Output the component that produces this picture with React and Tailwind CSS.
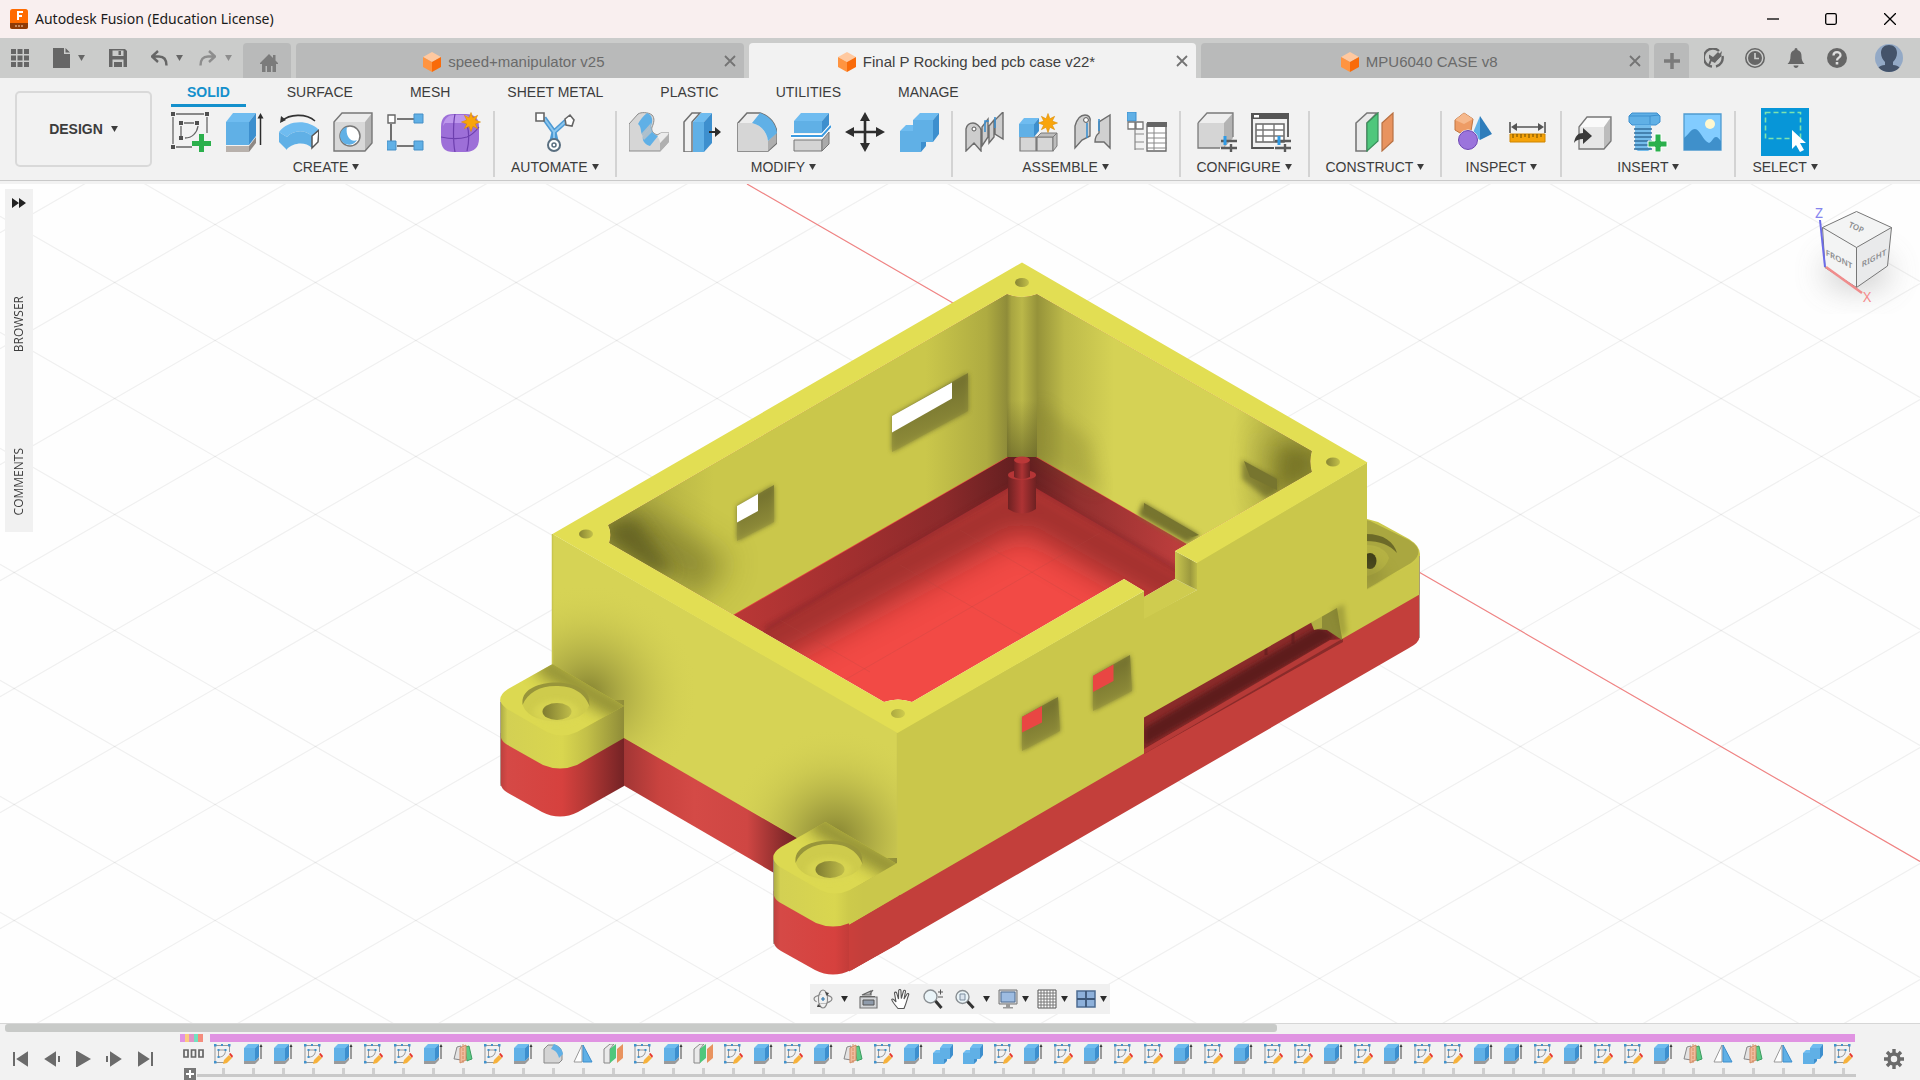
import React from "react";

const GREY = "#6b6b6b";
const BLUE = "#60b0e6";
const BLUE_TOP = "#6fbcf0";
const BLUE_SIDE = "#3d8fce";

/* ---------- small shared pieces ---------- */

function Caret({ className = "" }) {
  return (
    <svg viewBox="0 0 8 7" className={"h-1.5 w-[7px] shrink-0 " + className} aria-hidden="true">
      <path d="M0 0h8L4 7z" fill="currentColor" />
    </svg>
  );
}

function Art({ children, className = "h-10 w-10", box = "0 0 40 40" }) {
  return (
    <svg viewBox={box} className={className} fill="none" aria-hidden="true">
      {children}
    </svg>
  );
}

const Star = ({ x, y, s = 1 }) => (
  <path
    transform={`translate(${x} ${y}) scale(${s})`}
    d="M0-10 2-4.500 7-7 4.500-2 10 0 4.500 2 7 7 2 4.500 0 10-2 4.500-7 7-4.500 2-10 0-4.500-2-7-7-2-4.500z"
    fill="#f9a50b"
    stroke="#d98a00"
    strokeWidth=".6"
  />
);

/* ---------- ribbon icons ---------- */

const SketchIcon = () => (
  <Art>
    <path d="M5 2h28M2 5v27M36 5v16M5 35h16M10 14v11M13 11h10M27 14c-1 7-6 12-13 12" stroke="#666" strokeWidth="1.300" />
    <g fill="#4f4f4f">
      <path d="M0 0h4v4H0zM34 0h4v4h-4zM0 33h4v4H0zM8 9h4v4H8zM24 9h4v4h-4zM8 24h4v4H8z" />
    </g>
    <path d="M28 22h5v7h7v5h-7v7h-5v-7h-7v-5h7z" fill="#2bb04c" />
  </Art>
);

const ExtrudeIcon = () => (
  <Art>
    <path d="M1 34h23v6H1z" fill="#b8b1ac" />
    <path d="m24 34 7-9v6l-7 9z" fill="#8f8985" />
    <path d="M1 10h23v23H1z" fill={BLUE} />
    <path d="m1 10 7-9h23l-7 9z" fill={BLUE_TOP} />
    <path d="m24 10 7-9v23l-7 9z" fill={BLUE_SIDE} />
    <path d="M35.500 33V5" stroke="#2d2d2d" strokeWidth="1.500" />
    <path d="M32.500 6.500 35.500 1l3 5.500z" fill="#2d2d2d" />
  </Art>
);

const RevolveIcon = () => (
  <Art>
    <path d="M3 9C10 2 27 1 36 9" stroke="#333" strokeWidth="1.600" />
    <path d="m1 11 1-7 5 4z" fill="#333" />
    <path d="M0 20c9-12 29-13 40-2l-7 6C26 17 14 18 8 25z" fill={BLUE_TOP} />
    <path d="m0 20 8 5v13L0 30zM8 25c6-7 18-8 25-1v12c-7-7-19-5-25 1z" fill={BLUE} />
    <path d="m33 24 7-6-1 12-6 6z" fill="#fff" stroke="#555" strokeWidth="1.500" />
  </Art>
);

const HoleIcon = () => (
  <Art>
    <path d="M1 10 9 1h30l-7 9z" fill="#ececec" />
    <path d="M1 10h31v29H1z" fill="#d8d8d8" />
    <path d="m32 10 7-9v30l-7 8z" fill="#b5b5b5" />
    <path d="M1 10 9 1h30v30l-7 8H1z" stroke="#777" strokeWidth="1.400" />
    <circle cx="17" cy="24" r="10" fill="#fff" stroke="#777" strokeWidth="1.500" />
    <path d="M14 15a9 9 0 1 0 10 13c-6 3-12-4-10-13z" fill={BLUE} />
  </Art>
);

const PatternIcon = () => (
  <Art>
    <path d="M10 7h17M4 12v17M10 34h17" stroke="#4f4f4f" strokeWidth="1.600" />
    <path d="M1 3h7v8H1z" fill="#fff" stroke="#666" strokeWidth="1.400" />
    <path d="M27 2h9v9h-9zM0 29h9v9H0zM27 29h9v9h-9z" fill={BLUE} stroke="#468fc6" />
  </Art>
);

const FormIcon = () => (
  <Art>
    <path d="M0 15C0 6 4 2 12 2h13c9 0 13 5 13 13v12c0 8-5 13-13 13H12C4 40 0 36 0 27z" fill="#9d6fd8" />
    <path d="M2 14C3 6 8 3 13 3h10c5 0 7 3 2 8H4z" fill="#bd97ec" />
    <path d="M14 2c-2 10-2 28 0 38M0 25c9 2 19 2 26 0 5-2 8-5 12-10M26 12c2 8 2 19 0 27" stroke="#6d3fae" strokeWidth="1.200" />
    <Star x={30} y={10} s={0.95} />
  </Art>
);

const AutomateIcon = () => (
  <Art>
    <path d="m9 6 10 14-3 13h6l-3-13L31 9" stroke="#4d9ad4" strokeWidth="5" strokeLinejoin="round" />
    <path d="m9 6 10 14v12M19 20 31 9" stroke="#8cc6ee" strokeWidth="2" />
    <path d="M1 1h8v8H1zM30 7l5-4 4 5-2 6-6-1z" fill="#fff" stroke="#666" strokeWidth="1.600" />
    <circle cx="19" cy="33" r="6" fill="#fff" stroke="#5a6f80" strokeWidth="2" />
    <circle cx="19" cy="33" r="2" stroke="#5a6f80" strokeWidth="1.500" />
  </Art>
);

const PressPullIcon = () => (
  <Art>
    <path d="M0 12 9 2c3-2 10-2 14 1 3 3 2 8 0 12-1 4 1 6 5 8l4-2h8v8l-9 10H0z" fill="#d6d6d6" stroke="#8b8b8b" />
    <path d="m31 31 9-9v8l-9 10z" fill="#b0b0b0" />
    <path d="M28 24c2 2 3 5 3 7l9-10h-8z" fill="#ececec" />
    <path d="M9 12c2-4 5-8 9-11 6 2 6 8 4 13l-8 10c-3-3-1-9-5-12z" fill={BLUE} />
    <path d="M14 24 22 14c0 5 2 8 7 10l-8 10c-6-2-8-6-7-10z" fill={BLUE} />
    <path d="M13 21 22 11c-1 4 0 7 1 9l-8 8c-2-2-2-5-2-7z" fill="#c4c4c4" opacity=".75" />
  </Art>
);

const OffsetFaceIcon = () => (
  <Art>
    <path d="M1 10 9 1h8l-8 9v30H1z" fill="#f1f1f1" stroke="#707070" strokeWidth="1.500" />
    <path d="M10 10h11v30H10z" fill={BLUE} />
    <path d="m10 10 8-9h11l-8 9z" fill={BLUE_TOP} />
    <path d="m21 10 8-9v30l-8 9z" fill={BLUE_SIDE} />
    <path d="M26 20h7" stroke="#2d2d2d" strokeWidth="2" />
    <path d="m32 15 6 5-6 5z" fill="#2d2d2d" />
  </Art>
);

const FilletIcon = () => (
  <Art>
    <path d="M1 11 10 1h13c10 3 16 11 17 20v10l-9 8H1z" fill="#ededed" stroke="#6f6f6f" strokeWidth="1.500" />
    <path d="M1 11h13c9 1 16 9 17 18v10H1z" fill="#d6d6d6" />
    <path d="m31 29 8-8v10l-8 8z" fill="#aeaeae" />
    <path d="m15 11 8-10c10 3 16 11 17 20l-9 8C30 20 24 13 15 11z" fill={BLUE} />
  </Art>
);

const SplitIcon = () => (
  <Art>
    <path d="M3 28h28v11H3z" fill="#d4d4d4" stroke="#777" />
    <path d="m31 28 7-8v12l-7 7z" fill="#a9a9a9" stroke="#777" />
    <path d="M3 9h28v12H3z" fill={BLUE} />
    <path d="m3 9 7-8h28l-7 8z" fill={BLUE_TOP} />
    <path d="m31 9 7-8v12l-7 8z" fill={BLUE_SIDE} />
    <path d="M0 24h31l9-10" stroke="#fff" strokeWidth="4" />
    <path d="M0 24h31l9-10" stroke="#3d9be0" strokeWidth="2" />
  </Art>
);

const MoveIcon = () => (
  <Art>
    <path d="M20 6v28M6 20h28" stroke="#2e2e2e" strokeWidth="2.600" />
    <path d="m20 0 5 9H15zM20 40l5-9H15zM0 20l9-5v10zM40 20l-9-5v10z" fill="#2e2e2e" />
  </Art>
);

const CombineIcon = () => (
  <Art>
    <path d="M14 8h20v22H22v10H1V19h13z" fill={BLUE} />
    <path d="m14 8 7-7h19l-6 7zM1 19l6-6h7v6z" fill={BLUE_TOP} />
    <path d="m34 8 6-7v21l-6 8zM22 30h5v4l-5 6z" fill={BLUE_SIDE} />
  </Art>
);

const ComponentIcon = () => (
  <Art>
    <path d="M1 39V17c1-5 4-6 7-6s7 3 8 7v21l-7-8zM17 34V15l6-8v18l-6 9zM24 31l5-6V8l-5 6zM30 22V8l8-8v27l-8-5z" fill="#cdcdcd" stroke="#6d6d6d" strokeWidth="1.400" />
    <circle cx="9" cy="17" r="2" fill="#fff" stroke="#555" />
    <path d="M20 20V9h4M30 16V5" stroke="#3d8fce" strokeWidth="1.600" />
  </Art>
);

const NewComponentIcon = () => (
  <Art>
    <path d="M1 25h16v14H1zM18 25h16v14H18z" fill="#d6d6d6" stroke="#7a7a7a" strokeWidth="1.200" />
    <path d="m18 25 4-4h16l-4 4zM34 25l4-4v13l-4 5z" fill="#bdbdbd" stroke="#7a7a7a" />
    <path d="M0 12h15v13H0z" fill={BLUE} />
    <path d="m0 12 5-6h15l-5 6z" fill={BLUE_TOP} />
    <path d="m15 12 5-6v13l-5 6z" fill={BLUE_SIDE} />
    <Star x={29} y={11} s={0.95} />
  </Art>
);

const JointIcon = () => (
  <Art>
    <path d="M2 36V14C4 7 8 3 12 3s6 3 5 7v14l-8 4zM22 30c0-4 1-7 4-9V10l11-7v33l-6-6h-5z" fill="#d0d0d0" stroke="#6d6d6d" strokeWidth="1.400" />
    <circle cx="13" cy="8" r="2.400" fill="#fff" stroke="#555" />
    <path d="M14 11v15M26 7v12" stroke="#3d8fce" strokeWidth="1.600" />
  </Art>
);

const AsBuiltIcon = () => (
  <Art>
    <path d="M0 0h9v9H0z" fill={BLUE} stroke="#3d8fce" />
    <path d="M1 10h7v7H1zM9 10h7v7H9z" fill="#fff" stroke="#777" strokeWidth="1.300" />
    <path d="M8 17v21M8 22h9M8 30h9M8 37h9" stroke="#888" strokeWidth="1.200" />
    <path d="M20 12h19v27H20z" fill="#fff" stroke="#666" strokeWidth="1.300" />
    <path d="M20 10h20v5H20z" fill="#666" />
    <path d="M20 21h20M20 26h20M20 31h20M20 36h20M27 15v24" stroke="#888" />
  </Art>
);

const Sliders = () => (
  <g>
    <path d="M24 29h16M24 36h16" stroke="#5a5a5a" strokeWidth="2.400" />
    <path d="M28 24v9" stroke="#2f9be6" strokeWidth="3" />
    <path d="M34 32v8" stroke="#5a5a5a" strokeWidth="2.400" />
  </g>
);

const ConfigureIcon = () => (
  <Art>
    <path d="M1 11 10 1h26l-9 10z" fill="#eee" />
    <path d="M1 11h26v25H1z" fill="#d5d5d5" />
    <path d="m27 11 9-10v25l-9 10z" fill="#b3b3b3" />
    <path d="M1 11 10 1h26v24M1 11v25h22" stroke="#7a7a7a" strokeWidth="1.300" />
    <Sliders />
  </Art>
);

const ConfigTableIcon = () => (
  <Art>
    <path d="M1 2h36v23M1 2v34h22" stroke="#555" strokeWidth="1.800" />
    <path d="M0 1h38v6H0z" fill="#555" />
    <path d="M3 3h5v2.500H3z" fill="#fff" />
    <path d="M5 12h28v18H5z" fill="#fff" stroke="#666" strokeWidth="1.500" />
    <path d="M5 18h28M5 24h28M12 12v18M23 12v18" stroke="#777" strokeWidth="1.400" />
    <Sliders />
  </Art>
);

const PlaneIcon = () => (
  <Art>
    <path d="M1 11 12 1h10L12 11v28H1z" fill="#eaeaea" stroke="#777" strokeWidth="1.600" />
    <path d="M12 11 23 1v28L12 39z" fill="#4fc77c" stroke="#3a8f5b" strokeWidth="1.200" />
    <path d="M27 11 38 1v28L27 39z" fill="#e8935f" stroke="#b87143" strokeWidth="1.200" />
  </Art>
);

const MeasureIcon = () => (
  <Art>
    <path d="m1 8 9-7 9 6-2 12-11 2-5-3z" fill="#ee9c65" stroke="#bf7440" />
    <path d="m1 8 9 4 9-5-9-6z" fill="#f6b98d" />
    <path d="m26 4-8 19 8 5z" fill="#5fb0e6" />
    <path d="m26 4 12 18-12 6z" fill="#2f7dbb" />
    <circle cx="14" cy="28" r="10" fill="#9b74dc" stroke="#fff" strokeWidth="1" />
    <circle cx="14" cy="28" r="9.500" stroke="#6d47b0" />
  </Art>
);

const RulerIcon = () => (
  <Art>
    <path d="M2 10v11M37 10v11M7 15h25" stroke="#555" strokeWidth="1.600" />
    <path d="m3 15 6-4v8zM36 15l-6-4v8z" fill="#555" />
    <path d="M2 22h35v8H2z" fill="#f5a30a" stroke="#cf8500" />
    <path d="M5 22v4M9 22v3M13 22v4M17 22v3M21 22v4M25 22v3M29 22v4M33 22v3" stroke="#6b4800" />
  </Art>
);

const InsertIcon = () => (
  <Art>
    <path d="m5 15 8-10h24l-7 10z" fill="#fafafa" />
    <path d="M5 15h25v22H5z" fill="#e6e6e6" />
    <path d="m30 15 7-10v24l-7 8z" fill="#bcbcbc" />
    <path d="m5 15 8-10h24v24l-7 8H5z" stroke="#777" strokeWidth="1.300" />
    <path d="M0 31c1-7 4-10 9-10v-5l9 8-9 8v-5c-4 0-7 1-9 4z" fill="#3a3a3a" />
  </Art>
);

const BoltIcon = () => (
  <Art>
    <path d="m1 4 3-3h25l3 3v6l-4 3H4l-3-3z" fill={BLUE} stroke="#3d8fce" />
    <path d="M1 4h21v8M22 4l9-1" stroke="#3d8fce" />
    <path d="M7 13h16v24l-3 2H10l-3-2z" fill="#75bdec" />
    <path d="M6 17h18M6 21h18M6 25h18M6 29h18M6 33h18M6 37h18" stroke="#346f9c" strokeWidth="1.300" />
    <path d="M27 22h6v7h6v6h-6v5h-6v-5h-7v-6h7z" fill="#2bb04c" stroke="#fff" />
  </Art>
);

const ImageIcon = () => (
  <Art>
    <path d="M2 2h37v36H2z" fill="#82ccff" stroke="#4f9bd0" strokeWidth="1.300" />
    <circle cx="28" cy="12" r="5" fill="#fff8d0" />
    <path d="M2 26C7 22 9 17 13 17c5 0 8 12 14 14 3-1 4-6 7-6 2 0 3 2 5 4v9H2z" fill="#3f90cb" />
  </Art>
);

const SelectIcon = () => (
  <Art className="h-12 w-12" box="0 0 48 48">
    <path d="M0 0h48v48H0z" fill="#0796d8" />
    <path d="M4.500 4.500h35v26h-35z" stroke="#7de3ae" strokeWidth="1.600" strokeDasharray="5 3" />
    <path d="M31 22v19l4-4 4 7 4-2-4-7h6z" fill="#fff" />
  </Art>
);

/* ---------- timeline icons, drawn in a 20 by 20 box ---------- */

const tiny = "h-5 w-5";
const timelineIcons = {
  s: (
    <Art className={tiny} box="0 0 20 20">
      <path d="M2 1.500h14M2 1.500v17M16.500 1v7M2 18.500h9M5.500 6v7M6 6h6.500c0 4-2 7-6.500 7" stroke="#999" />
      <path d="M1 0h2.500v2.500H1zM15 0h2.500v2.500H15zM1 17h2.500v2.500H1zM4.500 5h2v2h-2zM11.500 5h2v2h-2zM4.500 12h2v2h-2zM8 0h2v2H8z" fill="#3f92ce" />
      <path d="m16 11 3 3-5 5-4 1 1-4z" fill="#f7b23c" />
      <path d="m16 10 1.500-1L20 12l-1 2z" fill="#e8352c" />
    </Art>
  ),
  e: (
    <Art className={tiny} box="0 0 20 20">
      <path d="M1 17h11v3H1zM12 17l4-4v3l-4 4z" fill="#9a9a9a" />
      <path d="M1 4h11v13H1z" fill={BLUE} />
      <path d="m1 4 4-4h11l-4 4z" fill={BLUE_TOP} />
      <path d="m12 4 4-4v13l-4 4z" fill={BLUE_SIDE} />
      <path d="M18 2v13" stroke="#444" />
      <path d="M16.500 3 18 0l1.500 3z" fill="#333" />
    </Art>
  ),
  m: (
    <Art className={tiny} box="0 0 20 20">
      <path d="M1 15 4 3l4-1v14l-6-1z" fill="#e3e3e3" stroke="#888" />
      <path d="m12 3 4-1 3 13-3 1-2 1z" fill="#5bcb86" stroke="#3d9a60" />
      <path d="m7 4 6-3v15l-6 3z" fill="#eebb9d" stroke="#d38d64" />
      <path d="M10 0v20" stroke="#d38d64" strokeDasharray="3 1" />
    </Art>
  ),
  f: (
    <Art className={tiny} box="0 0 20 20">
      <path d="m1 5 4-4h6c5 1 8 4 8 9v6l-3 3H1z" fill="#d4d4d4" stroke="#888" />
      <path d="m8 5 3-5c5 2 8 5 9 10l-4 4c-1-5-4-8-8-9z" fill={BLUE} />
    </Art>
  ),
  t: (
    <Art className={tiny} box="0 0 20 20">
      <path d="M9 1v17H1z" fill="#fff" stroke="#999" />
      <path d="m10 1 9 17h-9z" fill={BLUE} stroke="#3d8fce" />
    </Art>
  ),
  p: (
    <Art className={tiny} box="0 0 20 20">
      <path d="m1 5 6-5h4L7 5v14H1z" fill="#eaeaea" stroke="#888" />
      <path d="m7 5 6-5v14l-6 5z" fill="#4fc77c" />
      <path d="m14 5 6-5v14l-6 5z" fill="#e8935f" />
    </Art>
  ),
  c: (
    <Art className={tiny} box="0 0 20 20">
      <path d="M7 4h10v11h-6v5H0V9h7z" fill={BLUE} />
      <path d="m7 4 3-4h10l-3 4zM0 9l3-3h4v3z" fill={BLUE_TOP} />
      <path d="m17 4 3-4v11l-3 4zM11 15h3v2l-3 3z" fill={BLUE_SIDE} />
    </Art>
  ),
};
const timelineNames = { s: "Sketch", e: "Extrude", m: "Midplane", f: "Fillet", t: "Mirror", p: "Offset plane", c: "Combine" };
const timeline = [
  ..."seesessemseftps",
  ..."epsesemseccseses",
  ..."sesessesesse",
  ..."esesse",
  ..."mtmtcs",
];

/* ---------- application chrome ---------- */

function TitleBar() {
  return (
    <header className="flex h-[38px] shrink-0 items-center bg-[#f9efef] pl-[10px] font-['Noto_Sans',sans-serif]">
      <svg viewBox="0 0 18 20" className="h-5 w-[18px]" aria-hidden="true">
        <rect width="18" height="20" rx="2.500" fill="#ff6b00" />
        <path d="M0 14h18v3.500a2.500 2.500 0 0 1-2.500 2.500h-13A2.500 2.500 0 0 1 0 17.500z" fill="#8f3b06" />
        <path d="M7 3h6M8 3v8M8 7h4" stroke="#fff" strokeWidth="2" />
        <path d="M5 17h8" stroke="#d8a27c" strokeWidth="1.500" strokeDasharray="2 1" />
      </svg>
      <h1 className="ml-[7px] text-sm text-[#1a1a1a]">Autodesk Fusion (Education License)</h1>
      <div className="ml-auto flex h-full text-black">
        <button aria-label="Minimize" className="flex w-[58px] items-center justify-center">
          <Art className="h-3 w-3" box="0 0 12 12"><path d="M0 6h12" stroke="currentColor" strokeWidth="1.300" /></Art>
        </button>
        <button aria-label="Maximize" className="flex w-[58px] items-center justify-center">
          <Art className="h-3 w-3" box="0 0 12 12"><rect x=".7" y=".7" width="10.600" height="10.600" rx="1.500" stroke="currentColor" strokeWidth="1.300" /></Art>
        </button>
        <button aria-label="Close" className="flex w-[60px] items-center justify-center">
          <Art className="h-3 w-3" box="0 0 12 12"><path d="m0 0 12 12M12 0 0 12" stroke="currentColor" strokeWidth="1.300" /></Art>
        </button>
      </div>
    </header>
  );
}

function DocCube() {
  return (
    <svg viewBox="0 0 18 20" className="h-5 w-[18px] shrink-0" aria-hidden="true">
      <path d="m9 0 9 5-9 5-9-5z" fill="#ffc9a0" />
      <path d="m0 5 9 5v10l-9-5z" fill="#ff9440" />
      <path d="m18 5-9 5v10l9-5z" fill="#f96b0a" />
    </svg>
  );
}

function DocTab({ title, active }) {
  return (
    <div
      className={
        "flex h-[35px] min-w-0 flex-1 items-center rounded-t-[4px] pl-2 pr-2 " +
        (active ? "bg-[#f2f2f2] text-[#404040]" : "bg-[#b9baba] text-[#6a6a6a]")
      }
    >
      <button role="tab" aria-selected={!!active} className="flex h-full flex-1 items-center justify-center gap-[7px] pt-0.5 text-[15px] leading-5">
        <DocCube />
        <span className="whitespace-nowrap">{title}</span>
      </button>
      <button aria-label={"Close " + title} className="text-[#747474]">
        <Art className="h-3 w-3" box="0 0 12 12"><path d="m1 1 10 10M11 1 1 11" stroke="currentColor" strokeWidth="1.800" /></Art>
      </button>
    </div>
  );
}

function TabBar() {
  return (
    <div className="flex h-10 shrink-0 items-end bg-[#cbcccb] text-[#666]">
      <div className="flex h-full items-center pl-[11px]">
        <button aria-label="Show data panel">
          <Art className="h-[18px] w-[18px]" box="0 0 18 18">
            <path d="M0 0h5v5H0zM6.500 0h5v5h-5zM13 0h5v5h-5zM0 6.500h5v5H0zM6.500 6.500h5v5h-5zM13 6.500h5v5h-5zM0 13h5v5H0zM6.500 13h5v5h-5zM13 13h5v5h-5z" fill="currentColor" />
          </Art>
        </button>
        <button aria-label="File" className="ml-6 flex items-center gap-[7px]">
          <Art className="h-5 w-[18px]" box="0 0 18 20"><path d="M0 0h11v6h6v14H0zM12.500 0 17 4.500h-4.500z" fill="currentColor" /></Art>
          <Caret />
        </button>
        <button aria-label="Save" className="ml-6">
          <Art className="h-[18px] w-[18px]" box="0 0 18 18">
            <path d="M0 0h16l2 2v16H0zM3.500 1.500V7h11V1.500zM3.500 10.500V18H5v-5h8v5h1.500v-7.500z" fill="currentColor" fillRule="evenodd" />
            <path d="M9.500 2H12v4H9.500zM6.500 14h2v4h-2z" fill="currentColor" />
          </Art>
        </button>
        <button aria-label="Undo" className="ml-6 flex items-center gap-2">
          <Art className="h-4 w-[17px]" box="0 0 17 16"><path d="m7 1-6 5.500L7 12M2 6.500h6c5 0 7.500 3 7.500 9" stroke="currentColor" strokeWidth="2.400" /></Art>
          <Caret />
        </button>
        <button aria-label="Redo" className="ml-4 mr-[11px] flex items-center gap-[9px] text-[#8d8d8d]">
          <Art className="h-4 w-[17px]" box="0 0 17 16"><path d="m10 1 6 5.500-6 5.500M15 6.500H9c-5 0-7.500 3-7.500 9" stroke="currentColor" strokeWidth="2.400" /></Art>
          <Caret />
        </button>
      </div>
      <div role="tablist" aria-label="Documents" className="flex flex-1 gap-[5px]">
        <button aria-label="Home" className="flex h-[35px] w-12 shrink-0 items-center justify-center rounded-t-[4px] bg-[#b9baba] pt-1 pl-1">
          <Art className="h-[18px] w-[18px]" box="0 0 18 18">
            <path d="m0 9 9-9 4 4V1h2.500v5.500L18 9v1h-2v8h-3.500v-6H11v6H7v-6H5.500v6H2v-8H0z" fill="#7b7b7b" />
          </Art>
        </button>
        <DocTab title="speed+manipulator v25" />
        <DocTab title="Final P Rocking bed pcb case v22*" active />
        <DocTab title="MPU6040 CASE v8" />
        <button aria-label="New tab" className="flex h-[35px] w-[35px] shrink-0 items-center justify-center rounded-t-[4px] bg-[#b9baba]">
          <Art className="h-4 w-4" box="0 0 16 16"><path d="M8 0v16M0 8h16" stroke="#7b7b7b" strokeWidth="3.500" /></Art>
        </button>
      </div>
      <div className="flex h-full items-center pl-1 pr-[17px]">
        <button aria-label="Extensions" className="flex w-[41px] justify-center">
          <Art className="h-5 w-5" box="0 0 20 20">
            <path d="M8 18.500A9 9 0 1 1 15 3M18.500 8A9 9 0 0 1 12 18.500" stroke="currentColor" strokeWidth="2.400" />
            <path d="M5 6.500 9 9l5-5 1.500 1.500L18 3l-1 5-4 4-2 3-4-2-2-3z" fill="currentColor" />
            <path d="m11 13 6-6M7 12l-2 5" stroke="currentColor" strokeWidth="2" />
          </Art>
        </button>
        <button aria-label="Job status" className="flex w-[41px] justify-center">
          <Art className="h-5 w-5" box="0 0 20 20">
            <circle cx="10" cy="10" r="9.200" stroke="currentColor" strokeWidth="1.600" />
            <circle cx="10" cy="10" r="7" fill="currentColor" />
            <path d="M10 5v5.500h4" stroke="#cbcccb" strokeWidth="1.700" />
          </Art>
        </button>
        <button aria-label="Notifications" className="flex w-[41px] justify-center">
          <Art className="h-5 w-[18px]" box="0 0 18 20"><path d="M9 0c1 0 1.500.7 1.500 2 3 1 4 3 4 6 0 4 1 6 3 8H.5c2-2 3-4 3-8 0-3 1-5 4-6 0-1.300.5-2 1.500-2zM6.500 17.500h5c0 3.300-5 3.300-5 0z" fill="currentColor" /></Art>
        </button>
        <button aria-label="Help" className="flex w-[41px] justify-center">
          <Art className="h-5 w-5" box="0 0 20 20">
            <circle cx="10" cy="10" r="10" fill="currentColor" />
            <path d="M6.500 7.500c0-4.500 7-4.500 7-.3 0 2.500-3.500 2.500-3.500 5.300" stroke="#dedede" strokeWidth="2.300" />
            <path d="M8.700 14h2.600v2.500H8.700z" fill="#dedede" />
          </Art>
        </button>
        <button aria-label="Account" className="ml-[18px]">
          <Art className="h-7 w-7" box="0 0 28 28">
            <circle cx="14" cy="14" r="14" fill="#93a9c6" />
            <path d="M14 1c5 0 8 3 8 8 0 4-2 7-4 9v3c3 0 5 1 6.500 2.500C21 27 18 28 14 28s-7-1-10.500-4.500C5 22 7 21 10 21v-3c-2-2-4-5-4-9 0-5 3-8 8-8z" fill="#44536a" />
          </Art>
        </button>
      </div>
    </div>
  );
}

const ribbonTabs = ["SOLID", "SURFACE", "MESH", "SHEET METAL", "PLASTIC", "UTILITIES", "MANAGE"];
const ribbonGroups = [
  ["CREATE", [["Create sketch", SketchIcon], ["Extrude", ExtrudeIcon], ["Revolve", RevolveIcon], ["Hole", HoleIcon], ["Pattern", PatternIcon], ["Create form", FormIcon]]],
  ["AUTOMATE", [["Automated modeling", AutomateIcon]]],
  ["MODIFY", [["Press pull", PressPullIcon], ["Offset face", OffsetFaceIcon], ["Fillet", FilletIcon], ["Split", SplitIcon], ["Move", MoveIcon], ["Combine", CombineIcon]]],
  ["ASSEMBLE", [["Derive", ComponentIcon], ["New component", NewComponentIcon], ["Joint", JointIcon], ["Parts table", AsBuiltIcon]]],
  ["CONFIGURE", [["Configure design", ConfigureIcon], ["Configuration table", ConfigTableIcon]]],
  ["CONSTRUCT", [["Offset plane", PlaneIcon]]],
  ["INSPECT", [["Interference", MeasureIcon], ["Measure", RulerIcon]]],
  ["INSERT", [["Insert derive", InsertIcon], ["Insert fastener", BoltIcon], ["Canvas", ImageIcon]]],
  ["SELECT", [["Select", SelectIcon]]],
];

function Ribbon() {
  return (
    <div className="flex shrink-0 border-b border-[#c9c9c9] bg-[#f2f2f2] pl-[15px] pb-[3px] text-sm leading-5 text-[#3c3c3c]">
      <button className="mt-[13px] flex h-[76px] w-[137px] shrink-0 items-center justify-center gap-2 rounded-[5px] border-2 border-[#d9d9d9] font-bold">
        DESIGN
        <Caret />
      </button>
      <div className="ml-[7px]">
        <nav className="flex gap-[25px] pl-3">
          {ribbonTabs.map((t, i) => (
            <button
              key={t}
              className={
                "border-b-[3px] px-4 pt-1 pb-0.5 " +
                (i === 0 ? "border-[#1490cc] font-bold text-[#1490cc]" : "border-transparent")
              }
            >
              {t}
            </button>
          ))}
        </nav>
        <div className="mt-1 flex">
          {ribbonGroups.map(([label, tools], i) => (
            <section
              key={label}
              aria-label={label}
              className={"flex h-[66px] flex-col items-center pt-px " + (i < 8 ? "border-r-2 border-[#d3d3d3]" : "")}
            >
              <div className="flex h-10 items-center gap-[14px] px-3">
                {tools.map(([name, Icon]) => (
                  <button key={name} aria-label={name} title={name}>
                    <Icon />
                  </button>
                ))}
              </div>
              <button className="mt-[5px] flex items-center gap-1 px-4">
                {label}
                <Caret />
              </button>
            </section>
          ))}
        </div>
      </div>
    </div>
  );
}

/* ---------- 3D viewport ---------- */

const STEP_X = 100.4;
const STEP_Y = 58;

function GridLines() {
  const lines = [];
  for (let k = -14; k <= 18; k++) {
    const y = 282.5 + k * STEP_Y * 2;
    const left = (1319.5 / STEP_X) * STEP_Y;
    const right = ((1920 - 1319.5) / STEP_X) * STEP_Y;
    lines.push(<path key={"a" + k} d={`M0 ${y - left}L1920 ${y + right}`} />);
    lines.push(<path key={"b" + k} d={`M0 ${y + left}L1920 ${y - right}`} />);
  }
  return <g stroke="#000" strokeOpacity=".06" strokeWidth="1.200">{lines}</g>;
}

const INNER =
  "M608 525 1007 294Q1022 300 1037 294L1312 451Q1309 461 1312 472L1175 551V579L1144 597V591L1124 579 912 702Q898 697 884 702L609 543Q612 533 608 525z";

const FOOT_TOP = "M552.500 664 508 689Q493 699 507 709L547 732Q562 739 577 732L624 706z";

function Foot() {
  return (
    <g>
      <path d="M500.500 733V783Q501 789 508 793L542 812Q560 821 578 812L624 786V736z" fill="url(#footRed)" />
      <path d="M500.500 700V735Q501 741 506 744L543 765Q560 772 577 765L624 738V700z" fill="url(#footYellow)" />
      <path d={FOOT_TOP} fill="#dcd951" />
      <g clipPath="url(#footTop)">
        <path d="M540 652 640 710 622 724 535 672z" fill="#75732a" opacity=".75" filter="url(#soft)" />
      </g>
      <ellipse cx="556" cy="702.500" rx="33.500" ry="19" fill="#cecb4c" />
      <path d="M522.500 702c0-26 67-26 67 0v4c-6-15-18-20-34-20s-28 7-33 19z" fill="#98953a" />
      <ellipse cx="556.500" cy="712" rx="23" ry="12" fill="#dad752" opacity=".75" filter="url(#soft2)" />
      <ellipse cx="557" cy="711.500" rx="14.500" ry="8.500" fill="url(#screw)" />
    </g>
  );
}

const Window3d = ({ d, cut, fill }) => (
  <g>
    <path d={d} fill="#6b692c" opacity=".85" filter="url(#soft2)" />
    <path d={d} fill="url(#ledge)" opacity=".75" />
    <path d={cut} fill={fill} />
  </g>
);

function Model() {
  return (
    <g>
      {/* rear mounting foot */}
      <path d="M1360 517 1378 522 1409 539Q1420 546 1420 554V594L1360 630z" fill="#ccc94c" />
      <path d="M1360 518 1370 521 1409 540Q1427 551 1411 563L1360 593z" fill="#aaa740" />
      <path d="M1366 534C1384 534 1394 542 1397 553 1390 545 1380 541 1366 541z" fill="#6c6a28" />
      <path d="M1367 545c12 0 20 6 22 13-4 12-14 16-22 18z" fill="#b5b244" />
      <ellipse cx="1370" cy="561" rx="6.500" ry="8" fill="#3f3e19" />
      <path d="M1362 560v30l25-14z" fill="#77752e" opacity=".5" filter="url(#soft)" />

      {/* outer red base band */}
      <path d="M623 733 800 836V888L623 785z" fill="url(#redBand)" />
      <path d="M845 915 1144 740 1419.500 590V637Q1419 643 1409 648L851 970.500z" fill="#c33f3b" />

      {/* slot in the long side */}
      <path d="M1144 715 1340 602 1343 642 1144 754z" fill="#8a2b2a" />
      <path d="M1144 728 1320 626 1336 636 1144 746z" fill="#4b1617" opacity=".7" filter="url(#soft2)" />
      <path d="M1144 749 1330 640 1342 639 1144 754z" fill="#b63a37" />
      <path d="M1266 643v12M1293 630v14" stroke="#5e1c1d" strokeWidth="3" opacity=".6" />
      <path d="M1310 621 1339 604 1342 640 1327 630 1314 629z" fill="#8d8b37" />
      <path d="M1311 621 1322 616V628L1314 630z" fill="#b2af44" />

      {/* interior */}
      <path d={INNER} fill="#f24a45" />
      <g clipPath="url(#inner)">
        <path d="M690 680 1022 500 1230 618" stroke="#4d1415" strokeWidth="52" opacity=".5" fill="none" filter="url(#wide)" />
        <path d="M700 635 1022 449 1240 575V607L1022 480 740 644z" fill="url(#redWall)" />
        <path d="M765 629 1022 481 1180 571" stroke="#7e2426" strokeWidth="4" opacity=".55" fill="none" filter="url(#soft2)" />
        <path d="M590 525 1007 284V457L733 615 590 700z" fill="url(#wallL)" />
        <path d="M1037 284 1330 455V520L1187 544 1037 457z" fill="url(#wallR)" />
        <path d="M1037 457 1100 494 1090 440 1037 400z" fill="#66641f" opacity=".22" filter="url(#soft)" />
        <path d="M600 520 640 505 730 560 700 600z" fill="#57551f" opacity=".5" filter="url(#wide)" />
        <path d="M603 523 635 518 675 573 650 572 609 543z" fill="#57551f" opacity=".7" filter="url(#soft)" />
        <path d="M1262 430 1316 450V476L1262 502z" fill="#66641f" opacity=".45" filter="url(#wide)" />
        <path d="M1282 446 1314 451V474L1275 494z" fill="#66641f" opacity=".55" filter="url(#soft)" />
        <path d="M1242 460 1277 479V492L1266 498 1242 479z" fill="#5f5d25" opacity=".6" filter="url(#soft2)" />
        <path d="M1244 461 1277 479V490L1250 477z" fill="#77752f" />
        <path d="M1143 502 1200 535 1187 543 1138 515z" fill="#77752f" filter="url(#soft2)" />
        <path d="M1144 503 1199 535 1192 537 1144 509z" fill="#77752f" />
        <path d="M1007 290h30v167h-30z" fill="url(#post)" />
        <path d="M1007 400h30v57h-30z" fill="url(#postShade)" />
        <g stroke="#b24a44" strokeOpacity=".22">
          <path d="M810 700 1100 533M900 565 1050 652M960 530 1110 618M780 620 870 672" />
        </g>
      </g>
      <Window3d d="M892 416 968 373V411L892 452z" cut="M892 416 952 382.500V398.500L892 432.500z" fill="#fff" />
      <Window3d d="M737 506 774 485V522L737 541z" cut="M737 506 758 494V511L737 522.500z" fill="#fff" />
      <path d="M1008 475v34q14 9 28 0v-34z" fill="url(#pin)" />
      <ellipse cx="1022" cy="475" rx="14" ry="5" fill="#b53536" />
      <path d="M1014 459v18q8 4 16 0v-18z" fill="url(#pin)" />
      <ellipse cx="1022" cy="460" rx="8" ry="3.500" fill="#bb3838" />

      {/* outer walls */}
      <path d="M552.500 534V665L624 738 797 838 898 862V732z" fill="#d6d355" />
      <path d="M552.500 560V665L624 738 720 790 700 600z" fill="url(#footShadow1)" />
      <path d="M700 780 797 838 898 862V750L830 720z" fill="url(#footShadow2)" />
      <path
        d="M897.500 732 1144 591V618L1197 590V562L1367 462.500V590L1419.500 560V594.500L1342 639 1337 608 1144 717.500V753.500L852 923 840 880 897.500 862z"
        fill="#cac74b"
      />
      <path d="M1332 610 1344 604 1347 632 1341 638z" fill="#82802f" opacity=".5" filter="url(#soft2)" />
      <path d="M1144 597 1175 579 1197 590 1144 619z" fill="#cfcc4f" />
      <path d="M1175 551 1197 563V590L1175 579z" fill="url(#notch)" />

      {/* top rim */}
      <path
        fillRule="evenodd"
        d="M552.500 534 1022 262.500 1367.500 462.500 1197 563 1175 551 1312 472Q1309 461 1312 451L1037 294Q1022 300 1007 294L608 525Q612 533 609 543L884 702Q898 697 912 702L1124 579 1144 591 897.500 733z"
        fill="#e2de53"
      />
      <path d="M552.500 534V664M897.500 733V862" stroke="#c9c64e" strokeWidth="1.500" />
      {[[1022, 282.5], [586, 534], [1333, 462], [898, 713.5]].map(([x, y]) => (
        <ellipse key={x} cx={x} cy={y} rx="7" ry="4.500" fill="url(#screw)" opacity={y > 700 ? 0.55 : 0.9} />
      ))}

      <Window3d d="M1022 717 1058 697 1060 731 1022 751z" cut="M1022 717 1042 706V722.500L1022 732.500z" fill="#e94643" />
      <Window3d d="M1093 676 1130 655 1132 691 1093 711z" cut="M1093 676 1113.500 664.500V681L1093 692z" fill="#e94643" />

      {/* front feet */}
      <Foot />
      <g transform="translate(273 158)"><Foot /></g>
      <path d="M849 891 898 862.500V897L849 925z" fill="url(#turnYellow)" />
      <path d="M849 925 900 895V943L849 971.500z" fill="url(#turnRed)" />
      <path d="M1419.500 556V638M500.500 702V786M773.500 860V944" stroke="#9b8f86" strokeWidth="1" opacity=".7" />
    </g>
  );
}

function ViewCube() {
  return (
    <g fontFamily="'Noto Sans', sans-serif">
      <ellipse cx="1857" cy="272" rx="34" ry="16" fill="#777" opacity=".4" filter="url(#wide)" />
      <path d="M1856.500 211.500 1891.500 227.500 1887.500 266 1856.500 287.500 1825 267.500 1822.500 227.500z" fill="#f3f4f4" />
      <path d="M1856.500 247.500 1891.500 227.500 1887.500 266 1856.500 287.500z" fill="#e9eaeb" />
      <path d="M1822.500 227.500 1856.500 211.500 1891.500 227.500 1887.500 266 1856.500 287.500 1825 267.500zM1822.500 227.500 1856.500 247.500 1891.500 227.500M1856.500 247.500V287.500" fill="none" stroke="#777" />
      <path d="M1820 220 1825 267" stroke="#6b6be8" strokeWidth="2" />
      <path d="M1826 267 1862 293" stroke="#f08c8c" strokeWidth="2.500" />
      <g fill="#8b8d8f" fontWeight="600" textAnchor="middle" fontSize="8">
        <text transform="translate(1839 262) skewY(28)">FRONT</text>
        <text transform="translate(1874 261) skewY(-28)">RIGHT</text>
        <text transform="translate(1855 230) rotate(24)">TOP</text>
      </g>
      <text x="1819" y="218" fontSize="14" fill="#8585ee" textAnchor="middle">Z</text>
      <text x="1867" y="302" fontSize="14" fill="#f58c8c" textAnchor="middle">X</text>
    </g>
  );
}

function Scene() {
  return (
    <svg viewBox="0 184 1920 839" preserveAspectRatio="xMidYMid slice" className="absolute inset-0 h-full w-full" role="img" aria-label="Isometric view of the case">
      <defs>
        <clipPath id="inner"><path d={INNER} /></clipPath>
        <clipPath id="footTop"><path d={FOOT_TOP} /></clipPath>
        <filter id="soft2" x="-30%" y="-30%" width="160%" height="160%"><feGaussianBlur stdDeviation="2.500" /></filter>
        <filter id="soft" x="-60%" y="-60%" width="220%" height="220%"><feGaussianBlur stdDeviation="8" /></filter>
        <filter id="wide" x="-60%" y="-80%" width="220%" height="260%"><feGaussianBlur stdDeviation="16" /></filter>
        <linearGradient id="wallL" gradientUnits="userSpaceOnUse" x1="600" y1="0" x2="1007" y2="0">
          <stop offset="0" stopColor="#a5a23f" /><stop offset=".28" stopColor="#cac74b" /><stop offset=".8" stopColor="#cac74b" /><stop offset=".95" stopColor="#aeab41" /><stop offset="1" stopColor="#8f8c39" />
        </linearGradient>
        <linearGradient id="wallR" gradientUnits="userSpaceOnUse" x1="1037" y1="0" x2="1312" y2="0">
          <stop offset="0" stopColor="#959239" /><stop offset=".1" stopColor="#bdba4a" /><stop offset=".28" stopColor="#d5d255" /><stop offset=".72" stopColor="#d5d255" /><stop offset="1" stopColor="#a19e3e" />
        </linearGradient>
        <linearGradient id="redWall" gradientUnits="userSpaceOnUse" x1="700" y1="0" x2="1240" y2="0">
          <stop offset="0" stopColor="#c13a38" /><stop offset=".25" stopColor="#a53030" /><stop offset=".45" stopColor="#8c2a2b" /><stop offset=".6" stopColor="#5f1e1f" /><stop offset=".7" stopColor="#92302f" /><stop offset=".88" stopColor="#bb3d3c" /><stop offset="1" stopColor="#bb3d3c" />
        </linearGradient>
        <linearGradient id="redBand" gradientUnits="userSpaceOnUse" x1="624" y1="0" x2="800" y2="0">
          <stop offset="0" stopColor="#a23635" /><stop offset=".2" stopColor="#c9433f" /><stop offset=".4" stopColor="#d44a46" /><stop offset=".7" stopColor="#cf4643" /><stop offset=".9" stopColor="#8a2c2c" /><stop offset="1" stopColor="#6e2224" />
        </linearGradient>
        <linearGradient id="ledge" x1="0" y1="0" x2=".3" y2="1">
          <stop offset="0" stopColor="#5f5d27" /><stop offset="1" stopColor="#9d9a3f" />
        </linearGradient>
        <linearGradient id="post">
          <stop offset="0" stopColor="#8f8c39" /><stop offset=".15" stopColor="#a8a541" /><stop offset=".5" stopColor="#bbb849" /><stop offset="1" stopColor="#96933a" />
        </linearGradient>
        <linearGradient id="postShade" x2="0" y2="1">
          <stop offset="0" stopColor="#5d5b24" stopOpacity="0" /><stop offset="1" stopColor="#5d5b24" stopOpacity=".6" />
        </linearGradient>
        <linearGradient id="pin">
          <stop offset="0" stopColor="#6e2122" /><stop offset=".5" stopColor="#ae3334" /><stop offset="1" stopColor="#6e2122" />
        </linearGradient>
        <linearGradient id="notch">
          <stop offset="0" stopColor="#c9c64f" /><stop offset=".7" stopColor="#9c993e" /><stop offset="1" stopColor="#bebb48" />
        </linearGradient>
        <linearGradient id="screw">
          <stop offset="0" stopColor="#7f7c30" /><stop offset="1" stopColor="#bfbc49" />
        </linearGradient>
        <linearGradient id="footRed" gradientUnits="userSpaceOnUse" x1="500" y1="0" x2="624" y2="0">
          <stop offset="0" stopColor="#b9403e" /><stop offset=".06" stopColor="#d54946" /><stop offset=".5" stopColor="#d6413e" /><stop offset=".68" stopColor="#b73936" /><stop offset="1" stopColor="#742325" />
        </linearGradient>
        <linearGradient id="footYellow" gradientUnits="userSpaceOnUse" x1="500" y1="0" x2="624" y2="0">
          <stop offset="0" stopColor="#a9a744" /><stop offset=".06" stopColor="#d3d053" /><stop offset=".5" stopColor="#d9d64f" /><stop offset=".7" stopColor="#c3c048" /><stop offset="1" stopColor="#8f8c38" />
        </linearGradient>
        <linearGradient id="turnYellow"><stop offset="0" stopColor="#cdca4b" /><stop offset=".3" stopColor="#cac74b" /></linearGradient>
        <linearGradient id="turnRed"><stop offset="0" stopColor="#ca3f3b" /><stop offset=".3" stopColor="#c33f3b" /></linearGradient>
        <radialGradient id="footShadow1" gradientUnits="userSpaceOnUse" cx="588" cy="694" r="110">
          <stop offset="0" stopColor="#75732a" stopOpacity=".85" /><stop offset=".3" stopColor="#8d8b37" stopOpacity=".55" /><stop offset=".65" stopColor="#a9a642" stopOpacity=".22" /><stop offset="1" stopColor="#d6d355" stopOpacity="0" />
        </radialGradient>
        <radialGradient id="footShadow2" gradientUnits="userSpaceOnUse" cx="835" cy="838" r="110">
          <stop offset="0" stopColor="#75732a" stopOpacity=".85" /><stop offset=".3" stopColor="#8d8b37" stopOpacity=".6" /><stop offset=".65" stopColor="#a9a642" stopOpacity=".22" /><stop offset="1" stopColor="#d6d355" stopOpacity="0" />
        </radialGradient>
      </defs>
      <rect y="0" width="1920" height="1200" fill="#fefefe" />
      <GridLines />
      <path d="M747 184 1920 861.500" stroke="#f27f7f" strokeWidth="1.100" />
      <Model />
      <ViewCube />
    </svg>
  );
}

function SidePanel() {
  return (
    <aside className="absolute top-[5px] left-[5px] flex w-7 flex-col items-center bg-[#f1f1f1] pt-[9px] pb-4 font-['Open_Sans',sans-serif] text-xs leading-4 text-[#3c3c3c]">
      <button aria-label="Expand browser">
        <Art className="h-2.5 w-3.5" box="0 0 14 10"><path d="m0 0 7 5-7 5zM7 0l7 5-7 5z" fill="#222" /></Art>
      </button>
      <button className="mt-[88px] rotate-180 [writing-mode:vertical-rl]">BROWSER</button>
      <button className="mt-24 rotate-180 [writing-mode:vertical-rl]">COMMENTS</button>
    </aside>
  );
}

function NavBar() {
  return (
    <div className="absolute bottom-[9px] left-1/2 flex h-[30px] -translate-x-1/2 items-center bg-[#f0f0f0] px-[3px] text-[#2b2b2b]">
      <button aria-label="Orbit" className="flex items-center gap-2">
        <Art className="h-5 w-5" box="0 0 20 20">
          <ellipse cx="10" cy="10" rx="4.500" ry="9" stroke="#888" strokeWidth="1.200" />
          <ellipse cx="10" cy="10" rx="9" ry="4" stroke="#888" strokeWidth="1.200" strokeDasharray="13 4" />
          <path d="M6.500 6h7v8h-7z" fill="#f0f0f0" />
          <path d="M10 8v4M8 10h4" stroke="#2f77ad" strokeWidth="1.200" />
          <path d="m12 3 4 1-2 3zM5 15l-1 3 4 0z" fill="#444" />
        </Art>
        <Caret />
      </button>
      <button aria-label="Look at" className="ml-[11px]">
        <Art className="h-5 w-5" box="0 0 20 20">
          <path d="M1 8h17v11H1z" fill="#d3d5d8" stroke="#777" strokeWidth="1.200" />
          <path d="M4 11h11v5H4z" fill="#8f9bab" stroke="#555" />
          <path d="M3 6 12 2v4zM11 5l3-4M1 7.500h15" stroke="#666" strokeWidth="1.200" fill="#bbb" />
        </Art>
      </button>
      <button aria-label="Pan" className="ml-3">
        <Art className="h-5 w-5" box="0 0 20 20">
          <path d="M7 19.500C4 16 1 12 .7 10.500c.6-1 2-.6 4.300 2.500L3.500 4c.5-1.500 2-1 2.300.3L7.500 10 7.700 1.500c.5-1.300 2-1.200 2.200 0l.4 8L12.500 2c.6-1.200 2-.8 2 .5L13 10l3-5c.8-1 2-.3 1.700.8-1.700 4-2 8-4.700 13.700z" fill="#fff" stroke="#555" strokeWidth="1.100" />
        </Art>
      </button>
      <button aria-label="Zoom" className="ml-3">
        <Art className="h-5 w-5" box="0 0 20 20">
          <circle cx="7.500" cy="7.500" r="6.500" fill="#eaf4f8" stroke="#8a8f93" strokeWidth="1.400" />
          <path d="m12.500 12 6 7" stroke="#333" strokeWidth="3" />
          <path d="M15 3h5M17.500.5v5M15 8h5" stroke="#555" />
        </Art>
      </button>
      <button aria-label="Fit" className="ml-3 flex items-center gap-2">
        <Art className="h-5 w-5" box="0 0 20 20">
          <circle cx="7.500" cy="8" r="6.500" fill="#eaf4f8" stroke="#8a8f93" strokeWidth="1.400" />
          <path d="M5 5h5v6H5z" fill="#dbe4ee" stroke="#7d8d9e" />
          <path d="m12.500 12.500 6 6.500" stroke="#333" strokeWidth="3" />
        </Art>
        <Caret />
      </button>
      <button aria-label="Display settings" className="ml-2 flex items-center gap-1">
        <Art className="h-5 w-5" box="0 0 20 20">
          <path d="M1 1h18v14H1z" fill="#d5d7da" stroke="#777" />
          <path d="M3 3h14v10H3z" fill="#9dbce2" stroke="#4e6c92" />
          <path d="M8 15h4v3h3v1.500H5V18h3z" fill="#999" />
        </Art>
        <Caret />
      </button>
      <button aria-label="Grid and snaps" className="ml-2 flex items-center gap-1">
        <Art className="h-5 w-5" box="0 0 20 20">
          <path d="M1 1h18v18H1z" fill="#fff" stroke="#555" />
          <path d="M4 1v18M7 1v18M10 1v18M13 1v18M16 1v18M1 4h18M1 7h18M1 10h18M1 13h18M1 16h18" stroke="#777" />
        </Art>
        <Caret />
      </button>
      <button aria-label="Viewports" className="ml-2 flex items-center gap-1">
        <Art className="h-5 w-5" box="0 0 20 20">
          <path d="M1 2h18v16H1z" fill="#8db0da" stroke="#4e6c92" strokeWidth="1.500" />
          <path d="M10 2v16M1 10h18" stroke="#3c5677" strokeWidth="1.800" />
        </Art>
        <Caret />
      </button>
    </div>
  );
}

/* ---------- timeline ---------- */

const playback = [
  ["Go to start", "M1 1v14M14 2 5 8l9 6z"],
  ["Step back", "M15 5v6M11 2 2 8l9 6z"],
  ["Play", "M2 1l12 7-12 7z"],
  ["Step forward", "M1 5v6M5 2l9 6-9 6z"],
  ["Go to end", "M15 1v14M2 2l9 6-9 6z"],
];

function Timeline() {
  return (
    <footer className="shrink-0 bg-[#f2f2f2]">
      <div className="border-t border-[#d6d6d6] pl-[5px]">
        <div className="h-2 w-[66.4%] rounded-[3px] bg-[#c8cac8]" />
      </div>
      <div className="flex h-12 overflow-hidden">
        <div className="flex w-[177px] shrink-0 items-center gap-[15px] pt-1.5 pl-[13px]">
          {playback.map(([name, d]) => (
            <button key={name} aria-label={name}>
              <Art className="h-4 w-4" box="0 0 16 16">
                <path d={d} fill={GREY} stroke={GREY} strokeWidth="2" />
              </Art>
            </button>
          ))}
        </div>
        <div className="w-[33px] shrink-0 pt-0.5">
          <div className="ml-[3px] flex h-2 w-[23px]">
            <span className="flex-1 bg-[#e093e2]" />
            <span className="flex-1 bg-[#fccb7f]" />
            <span className="flex-1 bg-[#e093c6]" />
            <span className="flex-1 bg-[#72e0c0]" />
            <span className="flex-1 bg-[#f58d7e]" />
          </div>
          <button aria-label="Grouped features" className="ml-[6px] mt-[7px] block">
            <Art className="h-2.5 w-[21px]" box="0 0 21 10"><path d="M1 1h4v7H1zM8.500 1h4v7h-4zM16 1h4v7h-4z" stroke="#666" strokeWidth="1.700" /></Art>
          </button>
          <button aria-label="Expand group" className="mt-[9px] ml-[7px] block">
            <Art className="h-3 w-3" box="0 0 12 12">
              <path d="M0 0h12v12H0z" fill="#777" />
              <path d="M6 2v8M2 6h8" stroke="#fff" strokeWidth="2" />
            </Art>
          </button>
        </div>
        <div className="min-w-0 flex-1 pt-0.5">
          <div className="mr-px h-2 bg-[#e093e2]" />
          <ol className="-ml-0.5 mt-0.5 flex">
            {timeline.map((k, i) => (
              <li key={i} className="flex w-[30px] shrink-0 flex-col items-center">
                <button aria-label={`${timelineNames[k]} ${i + 1}`}>{timelineIcons[k]}</button>
                <span className="mt-1 h-1.5 w-[3px] bg-[#cfcfcf]" />
              </li>
            ))}
          </ol>
          <div className="-ml-[13px] h-[3px] bg-[#c9c9c9]" />
        </div>
        <div className="flex w-[64px] shrink-0 items-center justify-center pt-1.5 pl-3">
          <button aria-label="Timeline settings">
            <Art className="h-5 w-5" box="0 0 20 20">
              <circle cx="10" cy="10" r="5" stroke={GREY} strokeWidth="3.500" />
              <path d="M10 0v4M10 16v4M0 10h4M16 10h4M3 3l3 3M14 14l3 3M17 3l-3 3M6 14l-3 3" stroke={GREY} strokeWidth="3.400" />
            </Art>
          </button>
        </div>
      </div>
    </footer>
  );
}

export default function App() {
  return (
    <div className="flex h-screen flex-col overflow-hidden bg-[#f2f2f2] font-['Liberation_Sans',Arial,sans-serif]">
      <TitleBar />
      <TabBar />
      <Ribbon />
      <main className="relative mt-[3px] min-h-0 flex-1 overflow-hidden bg-white">
        <Scene />
        <SidePanel />
        <NavBar />
      </main>
      <Timeline />
    </div>
  );
}
